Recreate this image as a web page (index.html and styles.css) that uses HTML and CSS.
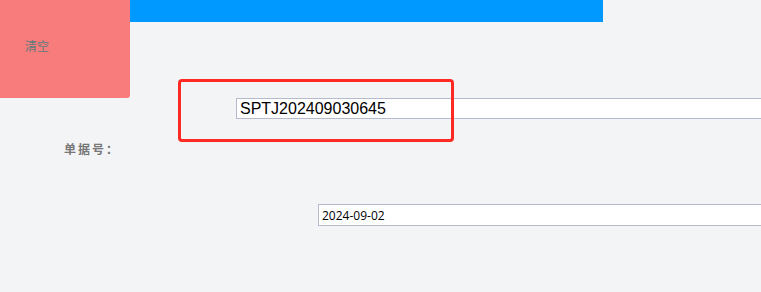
FILE: index.html
```html
<!DOCTYPE html>
<html lang="zh">
<head>
    <meta charset="UTF-8">
    <meta name="viewport" content="width=device-width, initial-scale=1.0">
    <title>单据查询</title>
    <link rel="stylesheet" href="styles.css">
</head>
<body>

<div id="page">
    <div class="top">
        <button class="btn-clear">清空</button>
        <div class="bar"></div>
    </div>
    <div class="field field-no">
        <input type="text" value="SPTJ202409030645">
    </div>
    <div class="label">单据号：</div>
    <div class="field field-date">
        <input type="text" value="2024-09-02">
    </div>
    <!-- cadre de surbrillance -->
    <div class="highlight"></div>
</div>

</body>
</html>
```

FILE: styles.css
```css
body {
    margin: 0;
    background-color: #f3f4f6;
    font-family: "Noto Sans CJK SC", sans-serif;
    overflow: hidden;
}
#page {
    position: relative;
    width: 761px;
    height: 292px;
    overflow: hidden;
}
.top {
    display: flex;
    align-items: flex-start;
    height: 98px;
}
.btn-clear {
    display: flex;
    align-items: flex-start;
    width: 130px;
    height: 98px;
    margin: 0;
    padding: 37px 0 0 25px;
    border: none;
    border-radius: 0 0 3px 0;
    background-color: #f87c7c;
    color: #5f7b7b;
    font-family: "Noto Sans CJK SC", sans-serif;
    font-size: 12px;
    text-align: left;
}
.bar {
    width: 473px;
    height: 22px;
    background-color: #0099ff;
}
.field input {
    display: block;
    box-sizing: border-box;
    margin: 0;
    border: 1px solid #b7b9cf;
    background-color: white;
    color: #000;
    outline: none;
}
.field-no {
    padding-left: 236px;
}
.field-no input {
    width: 530px;
    height: 21px;
    padding: 0 3px;
    font-family: "Liberation Sans", Arial, sans-serif;
    font-size: 16px;
}
.label {
    margin-top: 22px;
    padding-left: 64px;
    font-size: 12px;
    line-height: 16px;
    font-weight: bold;
    letter-spacing: 2px;
    color: #777;
}
.field-date {
    margin-top: 47px;
    padding-left: 318px;
}
.field-date input {
    width: 450px;
    height: 22px;
    padding: 0 3px;
    font-family: "Open Sans", sans-serif;
    font-size: 12px;
}
.highlight {
    position: absolute;
    left: 178px;
    top: 79px;
    width: 270px;
    height: 57px;
    border: 3px solid #ff2a24;
    border-radius: 4px;
}
```
